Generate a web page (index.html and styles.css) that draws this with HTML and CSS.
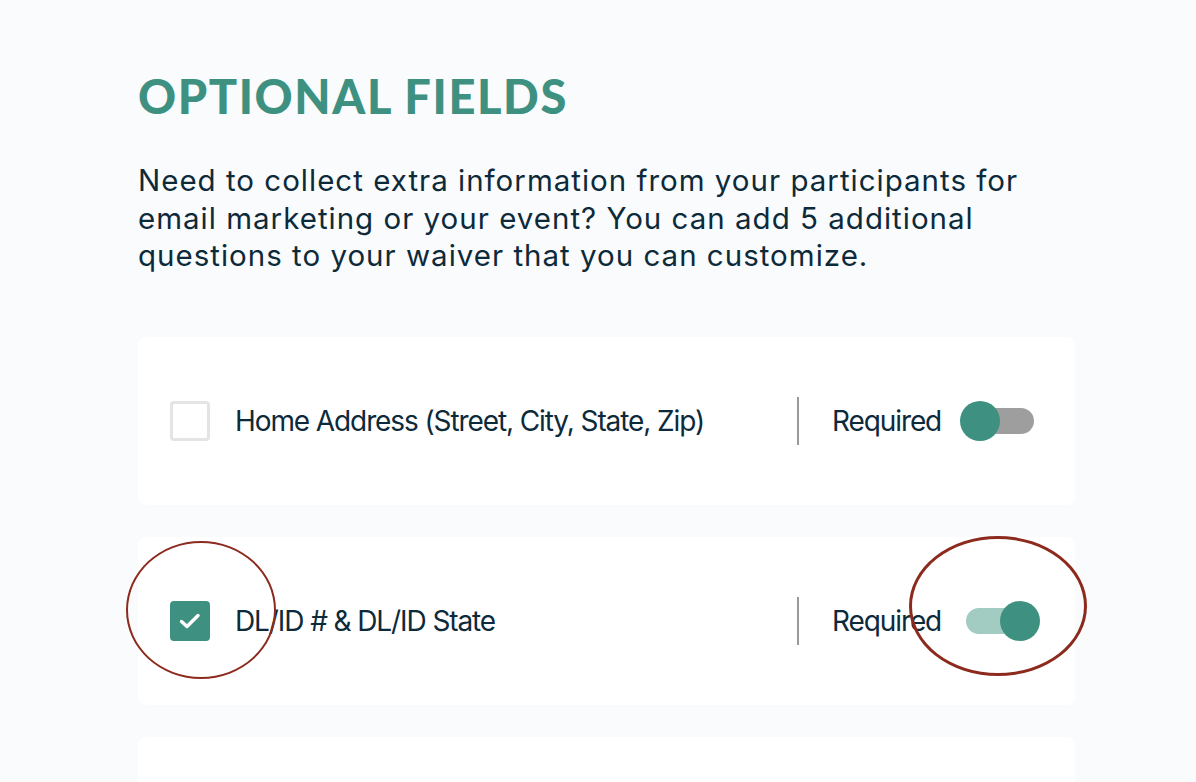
FILE: index.html
```html
<!DOCTYPE html>
<html>
<head>
<meta charset="utf-8">
<link rel="stylesheet" href="styles.css">
</head>
<body>
<main class="page">
  <h1 class="title">OPTIONAL FIELDS</h1>
  <p class="intro">Need to collect extra information from your participants for email marketing or your event? You can add 5 additional questions to your waiver that you can customize.</p>
  <div class="list">
    <div class="card">
      <div class="check"></div>
      <div class="label">Home Address (Street, City, State, Zip)</div>
      <div class="divider"></div>
      <div class="req">Required</div>
      <div class="toggle"><div class="track"></div><div class="knob"></div></div>
    </div>
    <div class="card">
      <div class="check on">
        <svg class="tick" width="24" height="24" viewBox="0 0 24 24"><path d="M3.5 12.5 L9 17.5 L20 6.5" fill="none" stroke="#fff" stroke-width="3.4" stroke-linecap="round" stroke-linejoin="round"/></svg>
      </div>
      <div class="label">DL/ID # &amp; DL/ID State</div>
      <div class="divider"></div>
      <div class="req">Required</div>
      <div class="toggle on"><div class="track"></div><div class="knob"></div></div>
      <div class="ring ring-a"></div>
      <div class="ring ring-b"></div>
    </div>
    <div class="card"></div>
  </div>
</main>
</body>
</html>
```
FILE: styles.css
```css
html, body {
  margin: 0;
  padding: 0;
  background: #f9fbfc;
}
.page {
  padding: 70px 121px 0 138px;
  font-family: "Inter", "Noto Sans", sans-serif;
  color: #0d2a3a;
}
.title {
  margin: 0;
  font-family: "Lato", sans-serif;
  font-weight: 900;
  font-size: 47px;
  line-height: 52px;
  letter-spacing: 1.6px;
  color: #3e9180;
}
.intro {
  margin: 40px 0 0 0;
  font-size: 29.5px;
  line-height: 37.5px;
  letter-spacing: 1px;
  max-width: 910px;
}
.list {
  margin-top: 62px;
  display: flex;
  flex-direction: column;
  gap: 32px;
}
.card {
  position: relative;
  height: 168px;
  background: #ffffff;
  border-radius: 8px;
  display: flex;
  align-items: center;
  padding: 0 0 0 32px;
}
.check {
  width: 34px;
  height: 34px;
  border: 3px solid #e4e4e4;
  border-radius: 4px;
  flex: none;
  display: flex;
  align-items: center;
  justify-content: center;
}
.check.on {
  background: #3e9180;
  border-color: #3e9180;
}
.tick {
  display: block;
}
.label {
  margin-left: 25px;
  font-size: 28px;
  letter-spacing: -1.1px;
  width: 562px;
  flex: none;
}
.divider {
  width: 2px;
  height: 48px;
  background: #9a9a9a;
  flex: none;
}
.req {
  margin-left: 33px;
  font-size: 28px;
  letter-spacing: -1.1px;
}
.toggle {
  position: relative;
  margin-left: 19px;
  width: 74px;
  height: 40px;
  flex: none;
}
.track {
  position: absolute;
  left: 5px;
  top: 7px;
  width: 69px;
  height: 26px;
  border-radius: 13px;
  background: #9e9e9e;
}
.knob {
  position: absolute;
  left: 0;
  top: 0;
  width: 40px;
  height: 40px;
  border-radius: 50%;
  background: #3e9180;
}
.toggle.on .track {
  background: #a2cbc1;
  left: 6px;
  width: 66px;
}
.toggle.on .knob {
  left: 40px;
}
.ring {
  position: absolute;
  border-radius: 50%;
  pointer-events: none;
}
.ring-a {
  left: -12px;
  top: 4px;
  width: 146px;
  height: 134px;
  border: 2px solid #8d2a1e;
}
.ring-b {
  left: 771px;
  top: -1px;
  width: 172px;
  height: 134px;
  border: 3px solid #8d2a1e;
}
```
